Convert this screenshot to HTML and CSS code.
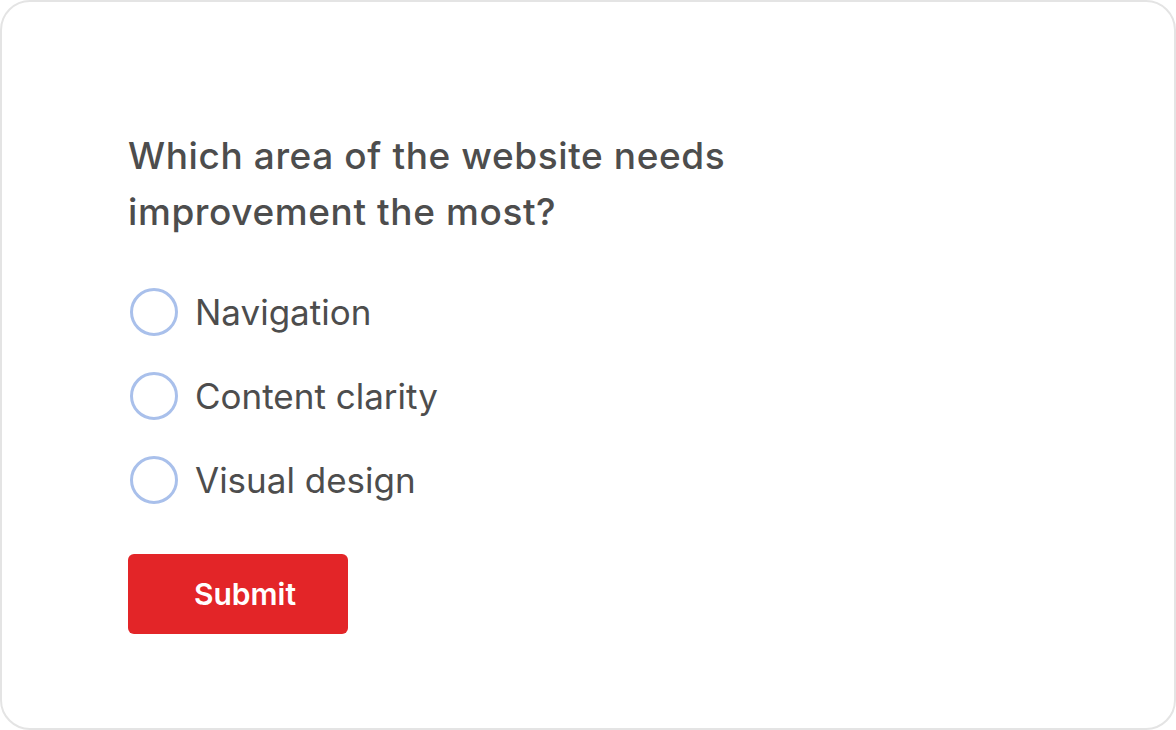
FILE: index.html
```html
<!DOCTYPE html>
<html lang="en">
<head>
  <meta charset="UTF-8" />
  <title>Survey</title>
  <link rel="stylesheet" href="styles.css">
</head>
<body>
  <div class="card">
    <h2 class="question">Which area of the website needs<br>improvement the most?</h2>

    <div class="options">
      <label class="option">
        <input type="radio" name="area" value="navigation" />
        <span class="circle"></span>
        <span class="text">Navigation</span>
      </label>
      <label class="option">
        <input type="radio" name="area" value="content" />
        <span class="circle"></span>
        <span class="text">Content clarity</span>
      </label>
      <label class="option">
        <input type="radio" name="area" value="visual" />
        <span class="circle"></span>
        <span class="text">Visual design</span>
      </label>
    </div>

    <button class="submit-button">Submit</button>
  </div>
</body>
</html>
```

FILE: styles.css
```css
body {
  font-family: Inter, 'Noto Sans', sans-serif;
  margin: 0;
  padding: 0;
  background: white;
}

.card {
  box-sizing: border-box;
  width: 1176px;
  height: 730px;
  border: 2px solid #e4e4e4;
  border-radius: 30px;
  padding: 126px 126px 0;
  background: white;
}

.question {
  margin: 0;
  font-size: 37px;
  font-weight: 500;
  line-height: 56px;
  color: #4d4d4d;
  letter-spacing: 0.6px;
}

.options {
  margin-top: 48px;
  display: flex;
  flex-direction: column;
  gap: 36px;
}

.option {
  display: flex;
  align-items: center;
  gap: 17px;
  cursor: pointer;
}

.option input {
  display: none;
}

.circle {
  box-sizing: border-box;
  width: 48px;
  height: 48px;
  margin-left: 2px;
  border: 3px solid #a9c0eb;
  border-radius: 50%;
}

.text {
  font-size: 35px;
  color: #4d4d4d;
  line-height: 48px;
}

.submit-button {
  margin-top: 50px;
  width: 220px;
  height: 80px;
  padding: 0 0 0 14px;
  background-color: #e32528;
  color: white;
  border: none;
  border-radius: 6px;
  font-family: inherit;
  font-size: 30px;
  font-weight: 600;
  cursor: pointer;
}
```
